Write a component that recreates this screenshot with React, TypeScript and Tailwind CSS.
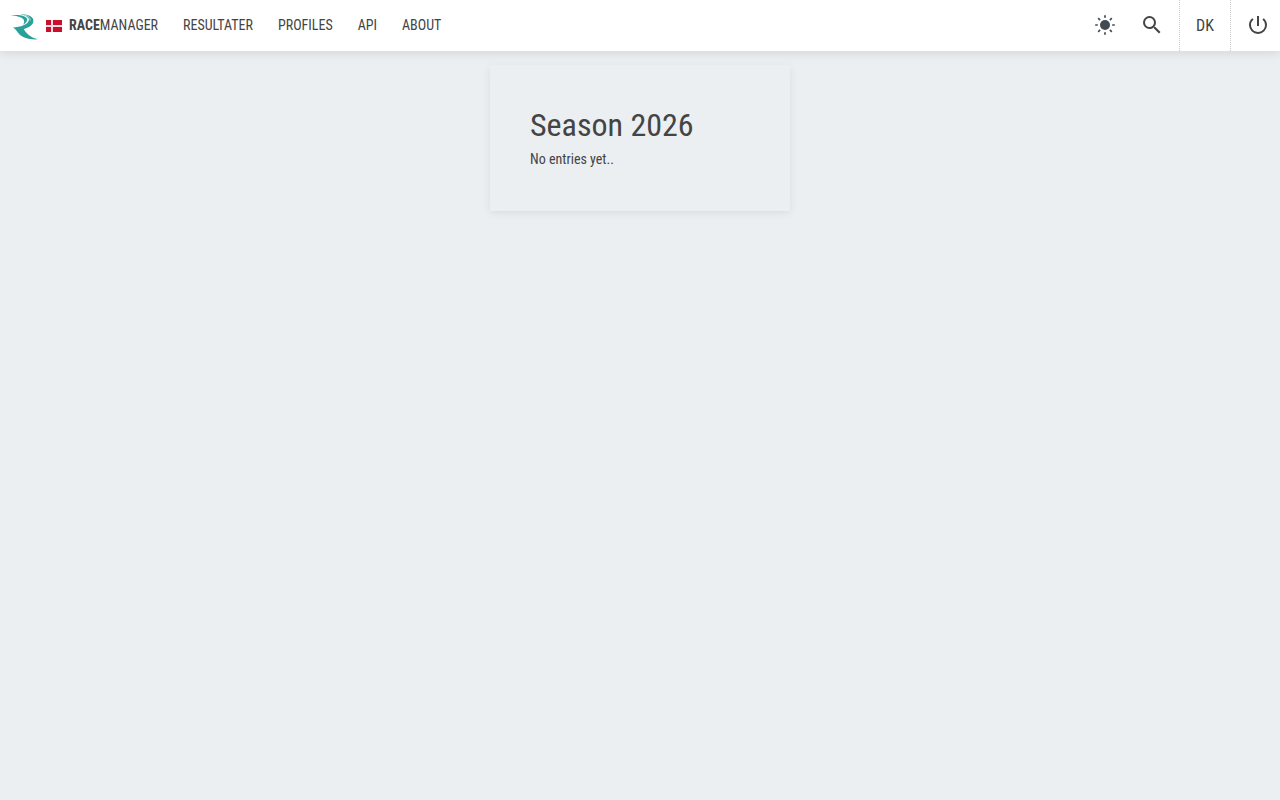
import { MdPowerSettingsNew, MdSearch } from "react-icons/md";

const links = ["Resultater", "Profiles", "API", "About"];

function Logo() {
  return (
    <svg viewBox="10 10.5 30 30" className="size-[30px]" aria-hidden="true">
      <g fill="#2aa198">
        <path d="M10.5 15.2C16 13.8 25.2 14.4 27 18.2C27.8 20.3 26 22.6 23 24.2C25 21.4 24.6 18.4 21 16.9C18 15.6 15 15.2 10.5 15.2Z" />
        <path d="M20.5 14.2C27 13.2 33.6 15.6 33.4 20.6C33.2 25 28.5 27.3 23.8 28.5C26 33 31 37.2 38 38.8C28 39.4 21 36.6 17.5 31.4C16.2 29.4 15 28.2 13 26.9C20 26.6 28.6 24 28.9 19.2C29 16.6 25.5 14.6 20.5 14.2Z" />
      </g>
      <path d="M24.5 14.5C29 15.6 30.5 17.6 30 20.2" fill="none" stroke="#fff" strokeWidth=".6" />
    </svg>
  );
}

function Flag() {
  return (
    <svg viewBox="0 0 16 12" className="mr-[7px] h-3 w-4" aria-hidden="true">
      <path fill="#c8102e" d="M0 0h16v12H0z" />
      <path fill="#fff" fillOpacity=".85" d="M5 0h2v5h9v2H7v5H5V7H0V5h5z" />
    </svg>
  );
}

function Sun() {
  return (
    <svg viewBox="0 0 20 20" className="size-5" aria-hidden="true">
      <circle cx="10" cy="10" r="5" fill="currentColor" />
      <path
        d="M10 .2v2.6M10 17.2v2.6M.2 10h2.6M17.2 10h2.6M3.2 3.2l1.9 1.9M14.9 14.9l1.9 1.9M16.8 3.2l-1.9 1.9M5.1 14.9l-1.9 1.9"
        stroke="currentColor"
        strokeWidth="1.7"
      />
    </svg>
  );
}

export default function App() {
  return (
    <div className="min-h-screen bg-[#ebeff2] font-['Roboto_Condensed','Roboto',sans-serif] text-sm text-[#444]">
      <header className="flex h-[51px] items-stretch justify-between bg-white shadow-[0_2px_10px_rgba(0,0,0,0.1)]">
        <nav className="flex items-center gap-[25px] uppercase">
          <a href="#home" className="flex items-center pl-[10px]">
            <Logo />
            <span className="ml-[6px] flex items-center">
              <Flag />
              <span className="pb-[2px]">
                <b>Race</b>manager
              </span>
            </span>
          </a>
          {links.map((label) => (
            <a key={label} href={`#${label.toLowerCase()}`} className="pb-[2px]">
              {label}
            </a>
          ))}
        </nav>
        <div className="flex items-stretch">
          <button type="button" aria-label="Toggle theme" className="px-3 pb-[2px] text-[#414b54]">
            <Sun />
          </button>
          <button type="button" aria-label="Search" className="pr-[15px] pb-[2px] pl-[13px]">
            <MdSearch className="size-6" />
          </button>
          <button type="button" className="w-[51px] border-l border-dotted border-[#ccc] text-base">
            DK
          </button>
          <button type="button" aria-label="Log in" className="border-l border-dotted border-[#ccc] pr-[10px] pb-[2px] pl-[15px]">
            <MdPowerSettingsNew className="size-6" />
          </button>
        </div>
      </header>
      <main className="flex justify-center pt-[14px]">
        <section className="w-[300px] rounded-xs px-10 pt-10 pb-[41px] shadow-[0_2px_8px_rgba(0,0,0,0.08)]">
          <h1 className="text-[32px] leading-[40px]">Season 2026</h1>
          <p className="mt-1 leading-[21px]">No entries yet..</p>
        </section>
      </main>
    </div>
  );
}
